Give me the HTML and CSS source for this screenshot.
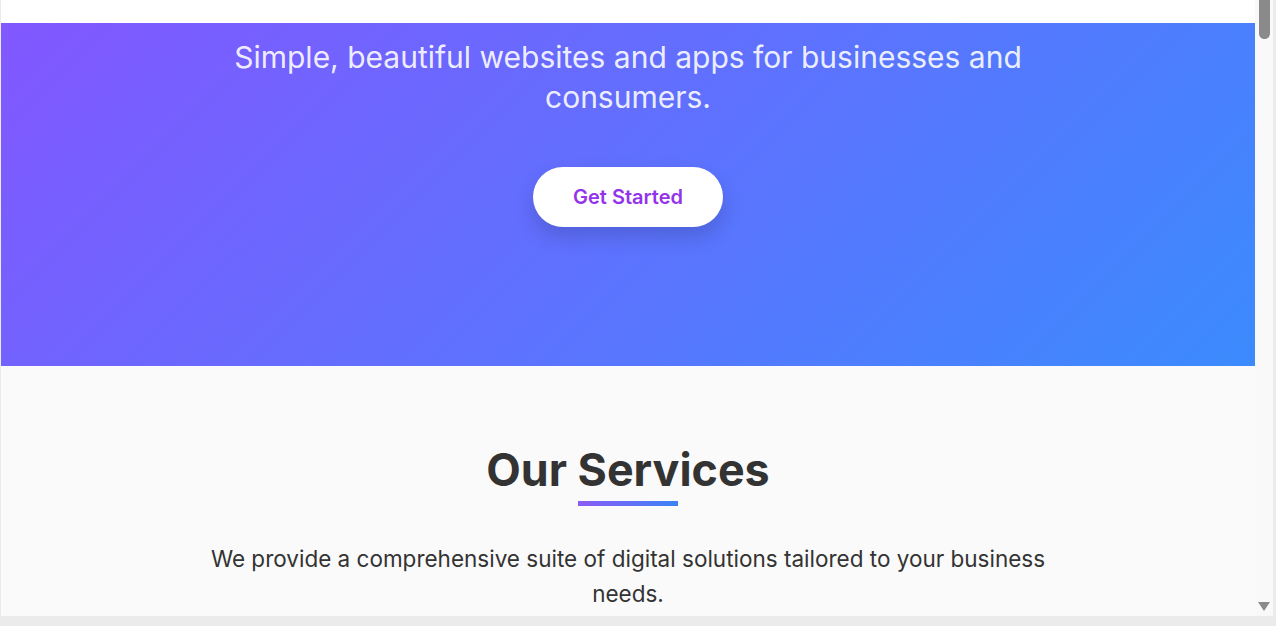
FILE: index.html
```html
<!DOCTYPE html>
<html lang="en">
<head>
<meta charset="utf-8">
<title>Services</title>
<link rel="stylesheet" href="styles.css">
</head>
<body>
<div class="frame">
  <div class="viewport">
    <div class="header-strip"></div>
    <section class="hero">
      <p class="hero-sub">Simple, beautiful websites and apps for businesses and consumers.</p>
      <a class="btn" href="#">Get Started</a>
    </section>
    <section class="services">
      <h2 class="section-title">Our Services</h2>
      <div class="title-bar"></div>
      <p class="section-lead">We provide a comprehensive suite of digital solutions tailored to your business needs.</p>
    </section>
  </div>
  <div class="scrollbar">
    <div class="thumb"></div>
    <div class="track-fill"></div>
    <div class="arrow-down"></div>
  </div>
</div>
</body>
</html>
```
FILE: styles.css
```css
html, body {
  margin: 0;
  padding: 0;
  height: 100%;
  overflow: hidden;
}
body {
  background: #ebebeb;
  font-family: Inter, "Liberation Sans", sans-serif;
}
.frame {
  display: flex;
  width: 1272px;
  height: 616px;
  margin-left: 1px;
  background: #ffffff;
}
.viewport {
  width: 1254px;
  height: 616px;
  overflow: hidden;
  background: #fafafa;
}
.header-strip {
  height: 23px;
  background: #ffffff;
}
.hero {
  height: 343px;
  box-sizing: border-box;
  padding-top: 14px;
  background: linear-gradient(135deg, #8257ff 0%, #3b8bfd 100%);
  display: flex;
  flex-direction: column;
  align-items: center;
  text-align: center;
}
.hero-sub {
  margin: 0;
  max-width: 800px;
  font-size: 30px;
  line-height: 40px;
  color: rgba(255, 255, 255, 0.9);
}
.btn {
  margin-top: 50px;
  display: inline-block;
  padding: 16px 40px;
  border-radius: 30px;
  background: #ffffff;
  color: #9333ea;
  font-size: 20px;
  line-height: 28px;
  font-weight: 600;
  text-decoration: none;
  box-shadow: 0 10px 20px rgba(0, 0, 0, 0.15);
}
.services {
  padding-top: 77px;
  display: flex;
  flex-direction: column;
  align-items: center;
  text-align: center;
  background: #fafafa;
}
.section-title {
  margin: 0;
  font-size: 44.8px;
  line-height: 54px;
  font-weight: 700;
  color: #333333;
}
.title-bar {
  margin-top: 4px;
  width: 100px;
  height: 5px;
  background: linear-gradient(90deg, #8b5cf6, #3b82f6);
}
.section-lead {
  margin: 35px 0 0;
  max-width: 860px;
  font-size: 22.5px;
  line-height: 35px;
  color: #333333;
}
.scrollbar {
  width: 18px;
  height: 616px;
  background: #f9f9f9;
  display: flex;
  flex-direction: column;
  align-items: flex-start;
}
.thumb {
  width: 11px;
  height: 39px;
  margin-left: 4px;
  background: #8a8a8a;
  border-radius: 0 0 6px 6px;
}
.track-fill {
  flex: 1;
}
.arrow-down {
  width: 0;
  height: 0;
  margin: 0 0 5px 3px;
  border-left: 6px solid transparent;
  border-right: 6px solid transparent;
  border-top: 9px solid #8a8a8a;
}
```
